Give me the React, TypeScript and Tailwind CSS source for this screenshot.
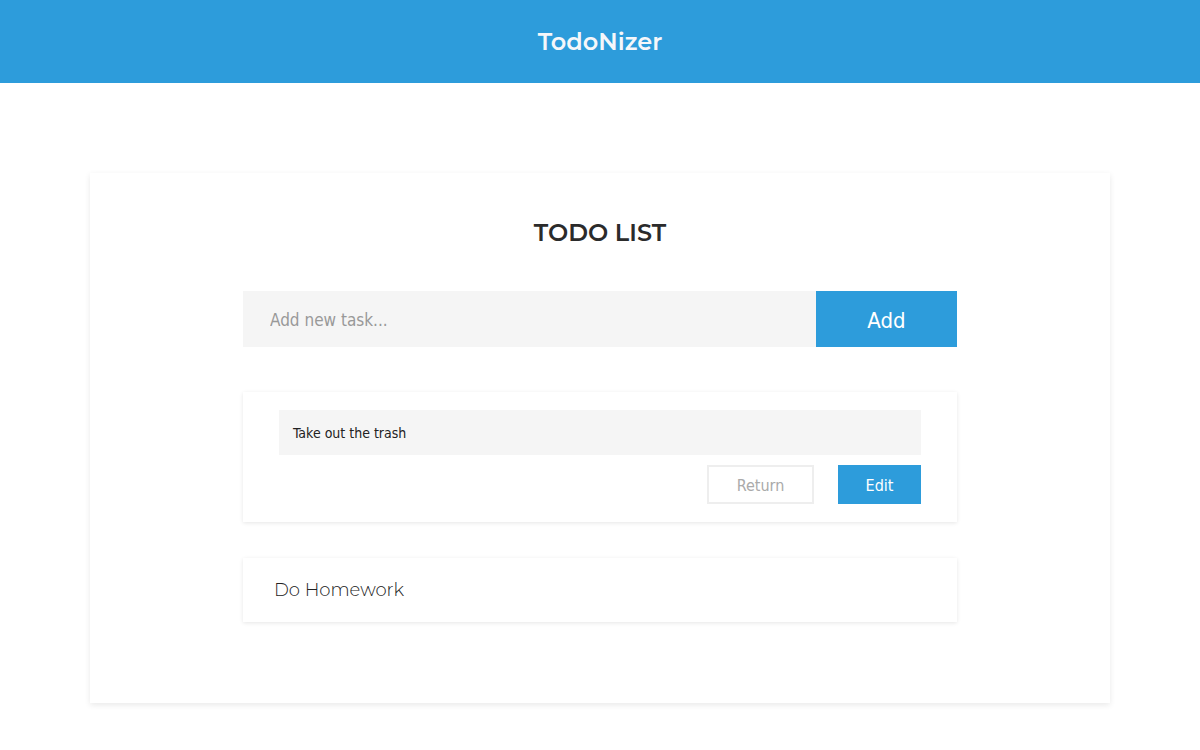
import { useState } from "react";

const title = "font-['Montserrat','Open_Sans','Noto_Sans',sans-serif]";
const body = "font-['DejaVu_Sans_Condensed','DejaVu_Sans',sans-serif]";

const App = () => {
  const [task, setTask] = useState("");

  return (
    <div className="min-h-[750px] bg-white">
      {/* Header */}
      <header className="h-[83px] bg-[#2d9cdb] flex items-center justify-center">
        <h1 className={`${title} text-[24px] font-semibold text-[#f5f7fa]`}>TodoNizer</h1>
      </header>

      {/* Main card */}
      <div className="pt-[90px] px-[90px]">
        <div className="bg-white shadow-[0_2px_6px_rgba(0,0,0,0.09)] px-[153px] pt-[45px] pb-[81px]">
          <h2 className={`${title} text-center text-[24px] font-semibold text-[#2b2b2b] leading-[30px]`}>
            TODO LIST
          </h2>

          {/* Add row */}
          <div className="mt-[43px] flex h-[56px]">
            <input
              value={task}
              onChange={(e) => setTask(e.target.value)}
              placeholder="Add new task..."
              className={`${body} flex-1 bg-[#f5f5f5] px-[27px] pt-[4px] text-[17px] text-[#333] placeholder:text-[#999] outline-none`}
            />
            <button className={`${body} w-[141px] bg-[#2d9cdb] text-white text-[22px] pt-[2px]`}>Add</button>
          </div>

          {/* Editing task */}
          <div className="mt-[45px] bg-white shadow-[0_1px_4px_rgba(0,0,0,0.1)] px-[36px] py-[18px]">
            <div className={`${body} h-[45px] bg-[#f5f5f5] flex items-center px-[14px] pt-[2px] text-[14px] text-[#222]`}>
              Take out the trash
            </div>
            <div className="mt-[10px] flex justify-end gap-[24px]">
              <button className={`${body} w-[107px] h-[39px] border-2 border-[#eeeeee] text-[#aaa] text-[16px] pt-[2px]`}>
                Return
              </button>
              <button className={`${body} w-[83px] h-[39px] bg-[#2d9cdb] text-white text-[16px] pt-[2px]`}>
                Edit
              </button>
            </div>
          </div>

          {/* Task */}
          <div className="mt-[36px] h-[64px] bg-white shadow-[0_1px_4px_rgba(0,0,0,0.1)] flex items-center px-[31px]">
            <span className={`${title} text-[18px] font-light text-[#222]`}>Do Homework</span>
          </div>
        </div>
      </div>
    </div>
  );
};

export default App;
